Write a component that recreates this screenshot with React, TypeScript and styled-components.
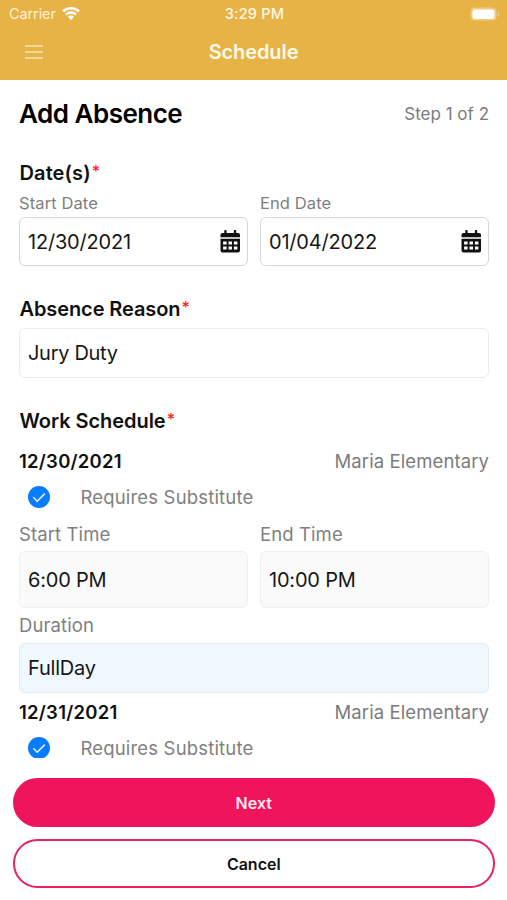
import React from "react";
import styled, { createGlobalStyle } from "styled-components";

const GlobalStyle = createGlobalStyle`
  *, *::before, *::after { box-sizing: border-box; }
  body { margin: 0; background: #fff; font-family: Inter, "Liberation Sans", sans-serif; color: #111; }
  button { font: inherit; cursor: pointer; }
  h1, h2, h3, p { margin: 0; }
`;

const Screen = styled.div`
  display: flex;
  flex-direction: column;
  height: 900px;
  overflow: hidden;
  background: #fff;
`;

const Header = styled.header`
  flex: none;
  height: 79.5px;
  background: #e7b246;
  color: #fff;
`;

const StatusBar = styled.div`
  display: grid;
  grid-template-columns: 1fr auto 1fr;
  align-items: center;
  height: 27px;
  padding: 0 7px 0 9px;
`;

const Carrier = styled.div`
  display: flex;
  align-items: center;
  gap: 6px;
  color: #fff2d2;
  font-size: 14.5px;
  letter-spacing: -0.1px;
`;

const Clock = styled.time`
  font-size: 14.5px;
  font-weight: 500;
  letter-spacing: 0.25px;
  color: #fff8e6;
`;

const BatteryIcon = styled.svg`
  justify-self: end;
`;

const NavBar = styled.nav`
  display: grid;
  grid-template-columns: 1fr auto 1fr;
  align-items: center;
  height: 50px;
  padding: 0 25px;
`;

const MenuButton = styled.button`
  display: flex;
  justify-self: start;
  padding: 0;
  border: 0;
  background: none;
`;

const NavTitle = styled.h1`
  font-size: 20px;
  line-height: 24px;
  font-weight: 600;
  letter-spacing: -0.1px;
  color: #fffaea;
`;

const Content = styled.main`
  flex: none;
  height: 678.5px;
  overflow: hidden;
  padding: 18px 18px 0 19px;
`;

const TitleRow = styled.div`
  display: flex;
  align-items: center;
  justify-content: space-between;
  height: 32px;
`;

const Title = styled.h2`
  font-size: 26px;
  line-height: 32px;
  font-weight: 600;
  letter-spacing: -0.5px;
  color: #000;
`;

const Step = styled.span`
  font-size: 17px;
  letter-spacing: 0;
  color: #7b7b7b;
`;

const Section = styled.section<{ $top: number }>`
  margin-top: ${(p) => p.$top}px;
`;

const SectionTitle = styled.h3<{ $spacing: number }>`
  display: flex;
  height: 26px;
  padding-left: 0.5px;
  font-size: 20px;
  line-height: 26px;
  font-weight: 600;
  letter-spacing: ${(p) => p.$spacing}px;
`;

const Required = styled.span`
  margin-left: 1px;
  font-size: 16px;
  line-height: 23px;
  font-weight: 500;
  color: #ff2020;
`;

const Columns = styled.div`
  display: grid;
  grid-template-columns: 1fr 1fr;
  column-gap: 12px;
`;

const Label = styled.div<{ $size: number; $height: number; $drop?: number; $spacing: number }>`
  height: ${(p) => p.$height}px;
  padding-top: ${(p) => p.$drop ?? 0}px;
  font-size: ${(p) => p.$size}px;
  line-height: ${(p) => p.$height - (p.$drop ?? 0)}px;
  letter-spacing: ${(p) => p.$spacing}px;
  color: #808080;
`;

const Field = styled.div<{ $height: number; $fill?: string; $line: string; $spacing: number }>`
  display: flex;
  align-items: center;
  justify-content: space-between;
  height: ${(p) => p.$height}px;
  padding: 0 6px 0 8px;
  border: 1px solid ${(p) => p.$line};
  border-radius: 6px;
  background: ${(p) => p.$fill ?? "#fff"};
  font-size: 20px;
  letter-spacing: ${(p) => p.$spacing}px;
  color: #161616;
`;

const DayHeader = styled.div`
  display: flex;
  align-items: center;
  justify-content: space-between;
  height: 30px;
`;

const DayDate = styled.strong`
  font-size: 18.5px;
  line-height: 28px;
  font-weight: 600;
  letter-spacing: 0.25px;
`;

const School = styled.span`
  font-size: 18.5px;
  line-height: 28px;
  letter-spacing: 0.1px;
  color: #7b7b7b;
`;

const SubstituteRow = styled.div`
  display: flex;
  align-items: center;
  gap: 31px;
  height: 42.5px;
  padding-left: 8.5px;
  font-size: 18.5px;
  letter-spacing: 0.17px;
  color: #808080;
`;

const Actions = styled.footer`
  display: flex;
  flex-direction: column;
  gap: 12.5px;
  padding: 20px 12.5px 0 13px;
`;

const ActionButton = styled.button<{ $primary?: boolean }>`
  height: 48.5px;
  padding: 1px 0 0;
  border: ${(p) => (p.$primary ? "0" : "2px solid #e8225f")};
  border-radius: 25px;
  background: ${(p) => (p.$primary ? "#f0145c" : "#fff")};
  color: ${(p) => (p.$primary ? "#ffe9f0" : "#111")};
  font-size: 16px;
  font-weight: 600;
  letter-spacing: 0;
`;

const WifiIcon = () => (
  <svg width="18" height="14" viewBox="0 0 18 14" fill="#fff">
    <path d="M9 0C5.5 0 2.400 1.350 0.200 3.500L2 5.350C3.850 3.600 6.300 2.500 9 2.500s5.150 1.100 7 2.850L17.800 3.500C15.600 1.350 12.500 0 9 0Z" />
    <path d="M9 4.300c-2.300 0-4.400.95-5.900 2.400l1.800 1.850C5.950 7.500 7.400 6.800 9 6.800s3.050.7 4.100 1.750l1.800-1.850C13.400 5.250 11.300 4.300 9 4.300Z" />
    <path d="M9 8.500c-1.200 0-2.250.5-3 1.250L9 13.200l3-3.450C11.250 9 10.200 8.500 9 8.500Z" />
  </svg>
);

const CalendarSvg = styled.svg`
  margin: 0 0 1px;
`;

const CalendarIcon = () => (
  <CalendarSvg width="21" height="23" viewBox="0 0 21 23">
    <path
      fill="#111"
      fillRule="evenodd"
      d="M4.300 1a1 1 0 0 1 2.300 0v2h7.300V1a1 1 0 0 1 2.300 0v2H18a2 2 0 0 1 2 2v2.300H.5V5a2 2 0 0 1 2-2h1.800ZM.5 8.800H20v11.700a2 2 0 0 1-2 2H2.500a2 2 0 0 1-2-2ZM3.100 11.600v3h3.500v-3Zm5.400 0v3H12v-3Zm5.400 0v3h3.500v-3ZM3.100 16.600v3h3.500v-3Zm5.400 0v3H12v-3Zm5.400 0v3h3.500v-3Z"
    />
  </CalendarSvg>
);

const CheckIcon = () => (
  <svg width="22" height="22" viewBox="0 0 22 22">
    <circle cx="11" cy="11" r="11" fill="#087cff" />
    <path d="m5.300 11.200 3.900 4L16.800 7.600" fill="none" stroke="#e8f4ff" strokeWidth="1.500" />
  </svg>
);

const RequiredTitle = ({ text, spacing }: { text: string; spacing: number }) => (
  <SectionTitle $spacing={spacing}>
    {text}
    <Required>*</Required>
  </SectionTitle>
);

const Day = ({ date, school }: { date: string; school: string }) => (
  <>
    <DayHeader>
      <DayDate>{date}</DayDate>
      <School>{school}</School>
    </DayHeader>
    <SubstituteRow>
      <CheckIcon />
      Requires Substitute
    </SubstituteRow>
  </>
);

const dates = [
  { label: "Start Date", value: "12/30/2021" },
  { label: "End Date", value: "01/04/2022" },
];
const times = [
  { label: "Start Time", value: "6:00 PM" },
  { label: "End Time", value: "10:00 PM" },
];

export default function App() {
  return (
    <>
      <GlobalStyle />
      <Screen>
        <Header>
          <StatusBar>
            <Carrier>
              Carrier
              <WifiIcon />
            </Carrier>
            <Clock>3:29 PM</Clock>
            <BatteryIcon width="30" height="14" viewBox="0 0 30 14">
              <rect x="0.500" y="0.500" width="26" height="13" rx="4" fill="#efcb80" />
              <rect x="2.500" y="2.500" width="22" height="9.500" rx="2.500" fill="#fff" />
              <path d="M28 5.200c1.600.6 1.600 3.400 0 4Z" fill="#f2d596" />
            </BatteryIcon>
          </StatusBar>
          <NavBar>
            <MenuButton aria-label="Menu">
              <svg width="18" height="16" viewBox="0 0 18 16">
                <path d="M0 2h18M0 8h18M0 14h18" stroke="#f9e3ad" strokeWidth="1.700" />
              </svg>
            </MenuButton>
            <NavTitle>Schedule</NavTitle>
          </NavBar>
        </Header>
        <Content>
          <TitleRow>
            <Title>Add Absence</Title>
            <Step>Step 1 of 2</Step>
          </TitleRow>
          <Section $top={30.5}>
            <RequiredTitle text="Date(s)" spacing={0.1} />
            <Columns>
              {dates.map((d) => (
                <div key={d.label}>
                  <Label $size={16.5} $height={31} $drop={3} $spacing={0.1}>{d.label}</Label>
                  <Field $height={49} $line="#d6d6d6" $spacing={-0.2}>
                    {d.value}
                    <CalendarIcon />
                  </Field>
                </div>
              ))}
            </Columns>
          </Section>
          <Section $top={30}>
            <RequiredTitle text="Absence Reason" spacing={-0.1} />
            <Section $top={6}>
              <Field $height={50} $line="#ececec" $spacing={-0.3}>Jury Duty</Field>
            </Section>
          </Section>
          <Section $top={29.5}>
            <RequiredTitle text="Work Schedule" spacing={-0.05} />
            <Section $top={12}>
              <Day date="12/30/2021" school="Maria Elementary" />
              <Columns>
                {times.map((t) => (
                  <div key={t.label}>
                    <Label $size={18.5} $height={33} $spacing={0.1}>{t.label}</Label>
                    <Field $height={57} $line="#f0f0f0" $fill="#fafafa" $spacing={-0.2}>{t.value}</Field>
                  </div>
                ))}
              </Columns>
              <Label $size={18.5} $height={35} $spacing={0.1}>Duration</Label>
              <Field $height={50} $line="#e2ebf2" $fill="#f0f8ff" $spacing={-0.2}>FullDay</Field>
              <Section $top={4}>
                <Day date="12/31/2021" school="Maria Elementary" />
              </Section>
            </Section>
          </Section>
        </Content>
        <Actions>
          <ActionButton $primary>Next</ActionButton>
          <ActionButton>Cancel</ActionButton>
        </Actions>
      </Screen>
    </>
  );
}
